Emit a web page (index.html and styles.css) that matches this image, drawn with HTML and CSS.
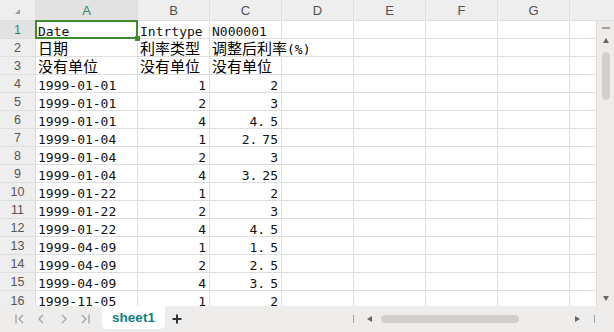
FILE: index.html
```html
<!DOCTYPE html>
<html>
<head>
<meta charset="utf-8">
<link rel="stylesheet" href="styles.css">
</head>
<body>
<div class="app">
  <div class="sheet">
    <div class="vscroll">
      <div class="vs-line"></div>
      <svg class="vs-up" width="6" height="5" viewBox="0 0 6 5"><polygon points="3,0 6,5 0,5" fill="#666"/></svg>
      <div class="vs-thumb"></div>
      <div class="vs-fill"></div>
      <svg class="vs-down" width="6" height="5" viewBox="0 0 6 5"><polygon points="0,0 6,0 3,5" fill="#666"/></svg>
    </div>

    <div class="h corner"><svg width="5" height="5" viewBox="0 0 5 5"><polygon points="5,0 5,5 0,5" fill="#9a9a9a"/></svg></div>
    <div class="h sel">A</div><div class="h">B</div><div class="h">C</div><div class="h">D</div><div class="h">E</div><div class="h">F</div><div class="h">G</div><div class="h last"></div>

    <div class="rh sel">1</div><div class="c active">Date</div><div class="c">Intrtype</div><div class="c">N000001</div><div class="c"></div><div class="c"></div><div class="c"></div><div class="c"></div><div class="c"></div>
    <div class="rh">2</div><div class="c cj">日期</div><div class="c cj">利率类型</div><div class="c cj wide">调整后利率<span class="m">(%)</span></div><div class="c"></div><div class="c"></div><div class="c"></div><div class="c"></div>
    <div class="rh">3</div><div class="c cj">没有单位</div><div class="c cj">没有单位</div><div class="c cj">没有单位</div><div class="c"></div><div class="c"></div><div class="c"></div><div class="c"></div><div class="c"></div>
    <div class="rh">4</div><div class="c">1999-01-01</div><div class="c n">1</div><div class="c n">2</div><div class="c"></div><div class="c"></div><div class="c"></div><div class="c"></div><div class="c"></div>
    <div class="rh">5</div><div class="c">1999-01-01</div><div class="c n">2</div><div class="c n">3</div><div class="c"></div><div class="c"></div><div class="c"></div><div class="c"></div><div class="c"></div>
    <div class="rh">6</div><div class="c">1999-01-01</div><div class="c n">4</div><div class="c n">4<span class="dot">.</span>5</div><div class="c"></div><div class="c"></div><div class="c"></div><div class="c"></div><div class="c"></div>
    <div class="rh">7</div><div class="c">1999-01-04</div><div class="c n">1</div><div class="c n">2<span class="dot">.</span>75</div><div class="c"></div><div class="c"></div><div class="c"></div><div class="c"></div><div class="c"></div>
    <div class="rh">8</div><div class="c">1999-01-04</div><div class="c n">2</div><div class="c n">3</div><div class="c"></div><div class="c"></div><div class="c"></div><div class="c"></div><div class="c"></div>
    <div class="rh">9</div><div class="c">1999-01-04</div><div class="c n">4</div><div class="c n">3<span class="dot">.</span>25</div><div class="c"></div><div class="c"></div><div class="c"></div><div class="c"></div><div class="c"></div>
    <div class="rh">10</div><div class="c">1999-01-22</div><div class="c n">1</div><div class="c n">2</div><div class="c"></div><div class="c"></div><div class="c"></div><div class="c"></div><div class="c"></div>
    <div class="rh">11</div><div class="c">1999-01-22</div><div class="c n">2</div><div class="c n">3</div><div class="c"></div><div class="c"></div><div class="c"></div><div class="c"></div><div class="c"></div>
    <div class="rh">12</div><div class="c">1999-01-22</div><div class="c n">4</div><div class="c n">4<span class="dot">.</span>5</div><div class="c"></div><div class="c"></div><div class="c"></div><div class="c"></div><div class="c"></div>
    <div class="rh">13</div><div class="c">1999-04-09</div><div class="c n">1</div><div class="c n">1<span class="dot">.</span>5</div><div class="c"></div><div class="c"></div><div class="c"></div><div class="c"></div><div class="c"></div>
    <div class="rh">14</div><div class="c">1999-04-09</div><div class="c n">2</div><div class="c n">2<span class="dot">.</span>5</div><div class="c"></div><div class="c"></div><div class="c"></div><div class="c"></div><div class="c"></div>
    <div class="rh">15</div><div class="c">1999-04-09</div><div class="c n">4</div><div class="c n">3<span class="dot">.</span>5</div><div class="c"></div><div class="c"></div><div class="c"></div><div class="c"></div><div class="c"></div>
    <div class="rh">16</div><div class="c">1999-11-05</div><div class="c n">1</div><div class="c n">2</div><div class="c"></div><div class="c"></div><div class="c"></div><div class="c"></div><div class="c"></div>
  </div>

  <div class="bottombar">
    <div class="nav">
      <svg width="9" height="10" viewBox="0 0 9 10"><path d="M1 0.5V9.5M8 1L4 5L8 9" fill="none" stroke="#a8a8a8" stroke-width="1.5"/></svg>
      <svg width="9" height="10" viewBox="0 0 9 10"><path d="M6 1L2 5L6 9" fill="none" stroke="#a8a8a8" stroke-width="1.5"/></svg>
      <svg width="9" height="10" viewBox="0 0 9 10"><path d="M3 1L7 5L3 9" fill="none" stroke="#a8a8a8" stroke-width="1.5"/></svg>
      <svg width="9" height="10" viewBox="0 0 9 10"><path d="M1 1L5 5L1 9M8 0.5V9.5" fill="none" stroke="#a8a8a8" stroke-width="1.5"/></svg>
    </div>
    <div class="tab">sheet1</div>
    <svg class="plus" width="10" height="10" viewBox="0 0 10 10"><path d="M5 0.5V9.5M0.5 5H9.5" fill="none" stroke="#333" stroke-width="2"/></svg>
    <div class="hscroll">
      <div class="hs-bar"></div>
      <svg class="hs-left" width="5" height="6" viewBox="0 0 5 6"><polygon points="0,3 5,0 5,6" fill="#666"/></svg>
      <div class="hs-thumb"></div>
      <div class="hs-fill"></div>
      <svg class="hs-right" width="5" height="6" viewBox="0 0 5 6"><polygon points="5,3 0,0 0,6" fill="#666"/></svg>
      <div class="hs-bar end"></div>
    </div>
  </div>
</div>
</body>
</html>
```
FILE: styles.css
```css
html, body {
  margin: 0;
  padding: 0;
}
body {
  width: 614px;
  height: 332px;
  overflow: hidden;
  background: #ffffff;
}
.app {
  width: 614px;
  height: 332px;
  display: flex;
  flex-direction: column;
}
.sheet {
  height: 306px;
  overflow: hidden;
  display: grid;
  grid-template-columns: 35px 101px repeat(6, 71px) 1fr 17px;
  grid-template-rows: 20px repeat(15, 17px) 1fr;
  gap: 1px;
  background: #dedede;
}
.h {
  background: #eeeeee;
  font-family: "Liberation Sans", Arial, sans-serif;
  font-size: 13px;
  color: #505050;
  display: flex;
  align-items: center;
  justify-content: center;
}
.h.last {
  grid-column: 9 / 11;
}
.corner {
  justify-content: flex-end;
  align-items: flex-end;
  padding: 0 15px 6px 0;
}
.corner svg {
  display: block;
}
.rh {
  background: #eeeeee;
  font-family: "Liberation Sans", Arial, sans-serif;
  font-size: 12.5px;
  color: #555555;
  display: flex;
  align-items: center;
  justify-content: center;
}
.sel {
  background: #e2e2e2;
  color: #2b8a70;
}
.c {
  background: #ffffff;
  font-family: "DejaVu Sans Mono", "Liberation Mono", monospace;
  font-size: 13px;
  line-height: 17px;
  padding: 2px 3px 0 2px;
  white-space: nowrap;
  color: #111111;
  min-width: 0;
}
.c.n {
  text-align: right;
}
.c.cj {
  font-family: "Noto Sans CJK SC", sans-serif;
  font-size: 15px;
  padding-top: 0;
  color: #000000;
}
.c.wide {
  grid-column: span 2;
}
.m {
  font-family: "DejaVu Sans Mono", "Liberation Mono", monospace;
  font-size: 13px;
}
.dot {
  letter-spacing: 5px;
}
.active {
  position: relative;
}
.active::after {
  content: "";
  position: absolute;
  left: -1px;
  top: -1px;
  right: -1px;
  bottom: -1px;
  border: 2px solid #3f8c2d;
}
.active::before {
  content: "";
  position: absolute;
  right: -3px;
  bottom: -3px;
  width: 5px;
  height: 5px;
  background: #3f8c2d;
  z-index: 1;
}
.vscroll {
  grid-column: 10;
  grid-row: 2 / 18;
  background: #eeebe9;
  display: flex;
  flex-direction: column;
  align-items: center;
}
.vs-line {
  width: 8px;
  height: 2px;
  background: #a0a0a0;
  margin-top: 6px;
}
.vs-up {
  display: block;
  margin-top: 9px;
}
.vs-thumb {
  width: 8px;
  height: 48px;
  border-radius: 4px;
  background: #d2cfcd;
  margin-top: 9px;
}
.vs-fill {
  flex: 1;
}
.vs-down {
  display: block;
  margin-bottom: 9px;
}
.bottombar {
  height: 26px;
  background: #efedeb;
  display: flex;
  align-items: center;
}
.nav {
  width: 102px;
  box-sizing: border-box;
  padding-left: 15px;
  display: flex;
  align-items: center;
  gap: 13px;
}
.nav svg {
  display: block;
}
.tab {
  align-self: flex-start;
  width: 63px;
  height: 23px;
  background: #ffffff;
  border-radius: 0 0 5px 5px;
  font-family: "Liberation Sans", Arial, sans-serif;
  font-weight: bold;
  font-size: 13.5px;
  color: #137f7f;
  display: flex;
  align-items: center;
  justify-content: center;
}
.plus {
  display: block;
  margin-left: 7px;
}
.hscroll {
  margin-left: auto;
  width: 261px;
  box-sizing: border-box;
  padding-right: 19px;
  display: flex;
  align-items: center;
}
.hs-bar {
  width: 1px;
  height: 8px;
  background: #a0a0a0;
}
.hs-left {
  display: block;
  margin-left: 13px;
}
.hs-thumb {
  margin-left: 9px;
  width: 138px;
  height: 8px;
  border-radius: 4px;
  background: #d2cfcd;
}
.hs-fill {
  flex: 1;
}
.hs-right {
  display: block;
  margin-right: 14px;
}
```
